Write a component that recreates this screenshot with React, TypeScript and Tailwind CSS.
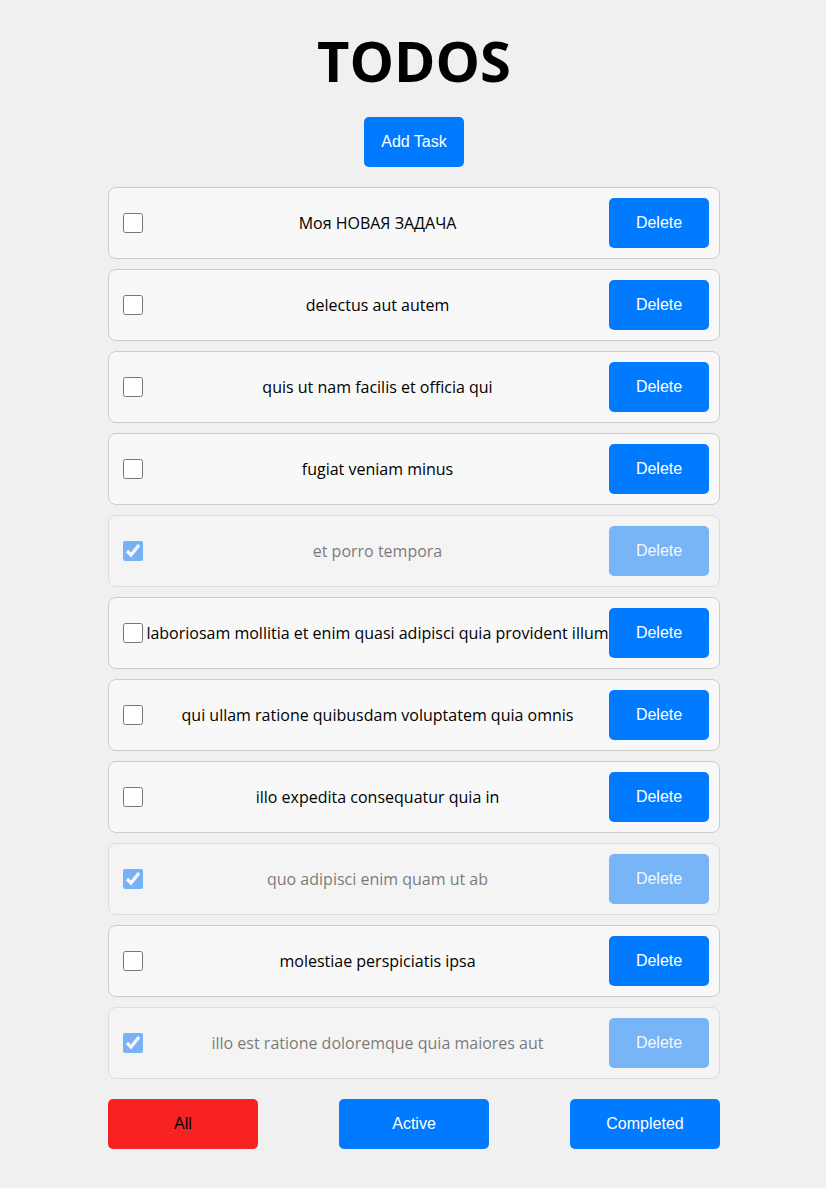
import { useState } from 'react';

type Todo = { id: number; title: string; completed: boolean };

const initialTodos: Todo[] = [
  { id: 1, title: 'Моя НОВАЯ ЗАДАЧА', completed: false },
  { id: 2, title: 'delectus aut autem', completed: false },
  { id: 3, title: 'quis ut nam facilis et officia qui', completed: false },
  { id: 4, title: 'fugiat veniam minus', completed: false },
  { id: 5, title: 'et porro tempora', completed: true },
  { id: 6, title: 'laboriosam mollitia et enim quasi adipisci quia provident illum', completed: false },
  { id: 7, title: 'qui ullam ratione quibusdam voluptatem quia omnis', completed: false },
  { id: 8, title: 'illo expedita consequatur quia in', completed: false },
  { id: 9, title: 'quo adipisci enim quam ut ab', completed: true },
  { id: 10, title: 'molestiae perspiciatis ipsa', completed: false },
  { id: 11, title: 'illo est ratione doloremque quia maiores aut', completed: true },
];

type Filter = 'all' | 'active' | 'completed';

export default function App() {
  const [todos, setTodos] = useState<Todo[]>(initialTodos);
  const [filter, setFilter] = useState<Filter>('all');

  const visible = todos.filter((t) =>
    filter === 'all' ? true : filter === 'active' ? !t.completed : t.completed
  );

  const toggle = (id: number) =>
    setTodos((prev) => prev.map((t) => (t.id === id ? { ...t, completed: !t.completed } : t)));

  const remove = (id: number) => setTodos((prev) => prev.filter((t) => t.id !== id));

  const addTask = () =>
    setTodos((prev) => [{ id: Date.now(), title: 'Новая задача', completed: false }, ...prev]);

  const filters: { key: Filter; label: string }[] = [
    { key: 'all', label: 'All' },
    { key: 'active', label: 'Active' },
    { key: 'completed', label: 'Completed' },
  ];

  return (
    <div className="min-h-screen bg-[#f0f0f0] pt-[22px] pb-10 pl-[2px] font-['Open_Sans',sans-serif]">
      <div className="mx-auto flex w-[612px] flex-col items-center">
        {/* Title */}
        <h1 className="text-[56px] font-bold leading-[76px] text-black">TODOS</h1>

        {/* Add button */}
        <button
          onClick={addTask}
          className="mt-[19px] h-[50px] w-[100px] rounded-[5px] bg-[#007bff] font-['Liberation_Sans',Arial,sans-serif] text-base text-white"
        >
          Add Task
        </button>

        {/* List */}
        <ul className="mt-5 flex w-full flex-col gap-[10px]">
          {visible.map((todo) => (
            <li
              key={todo.id}
              className={`flex items-center rounded-lg border border-[#cccccc] bg-[#f8f8f8] p-[10px] ${
                todo.completed ? 'opacity-50' : ''
              }`}
            >
              <input
                type="checkbox"
                checked={todo.completed}
                onChange={() => toggle(todo.id)}
                className="mt-[3px] mr-[3px] mb-[3px] ml-1 h-5 w-5 shrink-0"
              />
              <span className="flex-1 text-center text-base text-black">{todo.title}</span>
              <button
                onClick={() => remove(todo.id)}
                className="h-[50px] w-[100px] shrink-0 rounded-[5px] bg-[#007bff] font-['Liberation_Sans',Arial,sans-serif] text-base text-white"
              >
                Delete
              </button>
            </li>
          ))}
        </ul>

        {/* Filters */}
        <div className="mt-5 flex w-full justify-between">
          {filters.map((f) => (
            <button
              key={f.key}
              onClick={() => setFilter(f.key)}
              className={`h-[50px] w-[150px] rounded-[5px] font-['Liberation_Sans',Arial,sans-serif] text-base ${
                filter === f.key ? 'bg-[#f82222] text-black' : 'bg-[#007bff] text-white'
              }`}
            >
              {f.label}
            </button>
          ))}
        </div>
      </div>
    </div>
  );
}
